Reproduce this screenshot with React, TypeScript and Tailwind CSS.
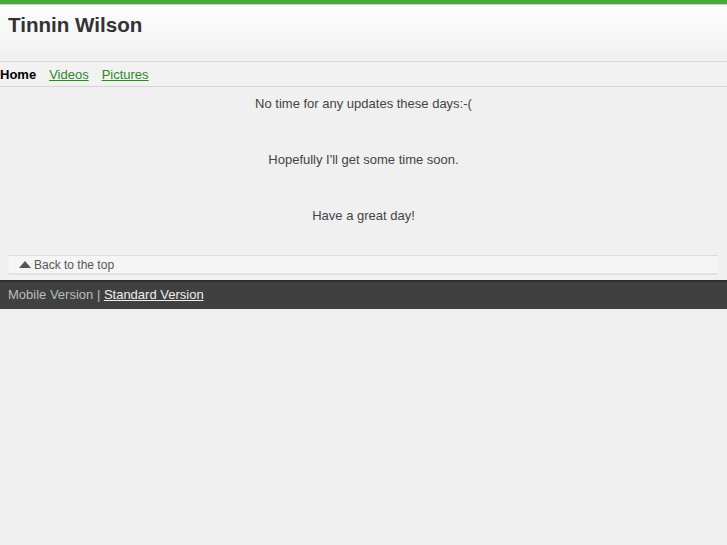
export default function App() {
  return (
    <div className="min-h-[545px] bg-[#f0f0f0] text-[13px] text-[#444] [font-family:'Liberation_Sans',Arial,sans-serif]">
      <div className="h-[4px] bg-[#47a937]" />
      <div className="h-[1px] bg-[#d0d0d0]" />
      <header className="h-[46px] bg-gradient-to-b from-[#fdfdfd] to-[#f3f3f3] px-[8px] pt-[8px]">
        <h1 className="text-[20.6px] font-bold leading-[24px] text-[#333]">Tinnin Wilson</h1>
      </header>
      <div className="h-[10px] bg-[#f0f0f0]" />
      <nav className="flex h-[26px] items-center gap-[13px] border-y border-[#d6d6d6] bg-[#f2f2f2] pt-[1px]">
        <span className="font-bold text-black">Home</span>
        <a className="text-[#2a8a1e] underline" href="#">Videos</a>
        <a className="text-[#2a8a1e] underline" href="#">Pictures</a>
      </nav>
      <main className="flex flex-col items-center gap-[41px] pt-[9px] leading-[15px]">
        <p>No time for any updates these days:-(</p>
        <p>Hopefully I'll get some time soon.</p>
        <p>Have a great day!</p>
      </main>
      <div className="mx-[9px] mt-[32px] flex h-[20px] items-center gap-[3px] border-t border-b-2 border-t-[#dcdcdc] border-b-[#e2e2e2] bg-[#f5f5f5] pl-[10px] text-[12px] text-[#555]">
        <svg width="12" height="7" viewBox="0 0 12 7" className="mb-[1px]">
          <polygon points="6,0 12,7 0,7" fill="#555" />
        </svg>
        <span>Back to the top</span>
      </div>
      <footer className="mt-[5px] flex h-[29px] items-center border-t-2 border-[#2f2f2f] bg-[#404040] px-[8px] pb-[2px] text-[#bdbdbd]">
        <span>Mobile Version |&nbsp;</span>
        <a className="text-[#eeeeee] underline" href="#">Standard Version</a>
      </footer>
    </div>
  );
}
